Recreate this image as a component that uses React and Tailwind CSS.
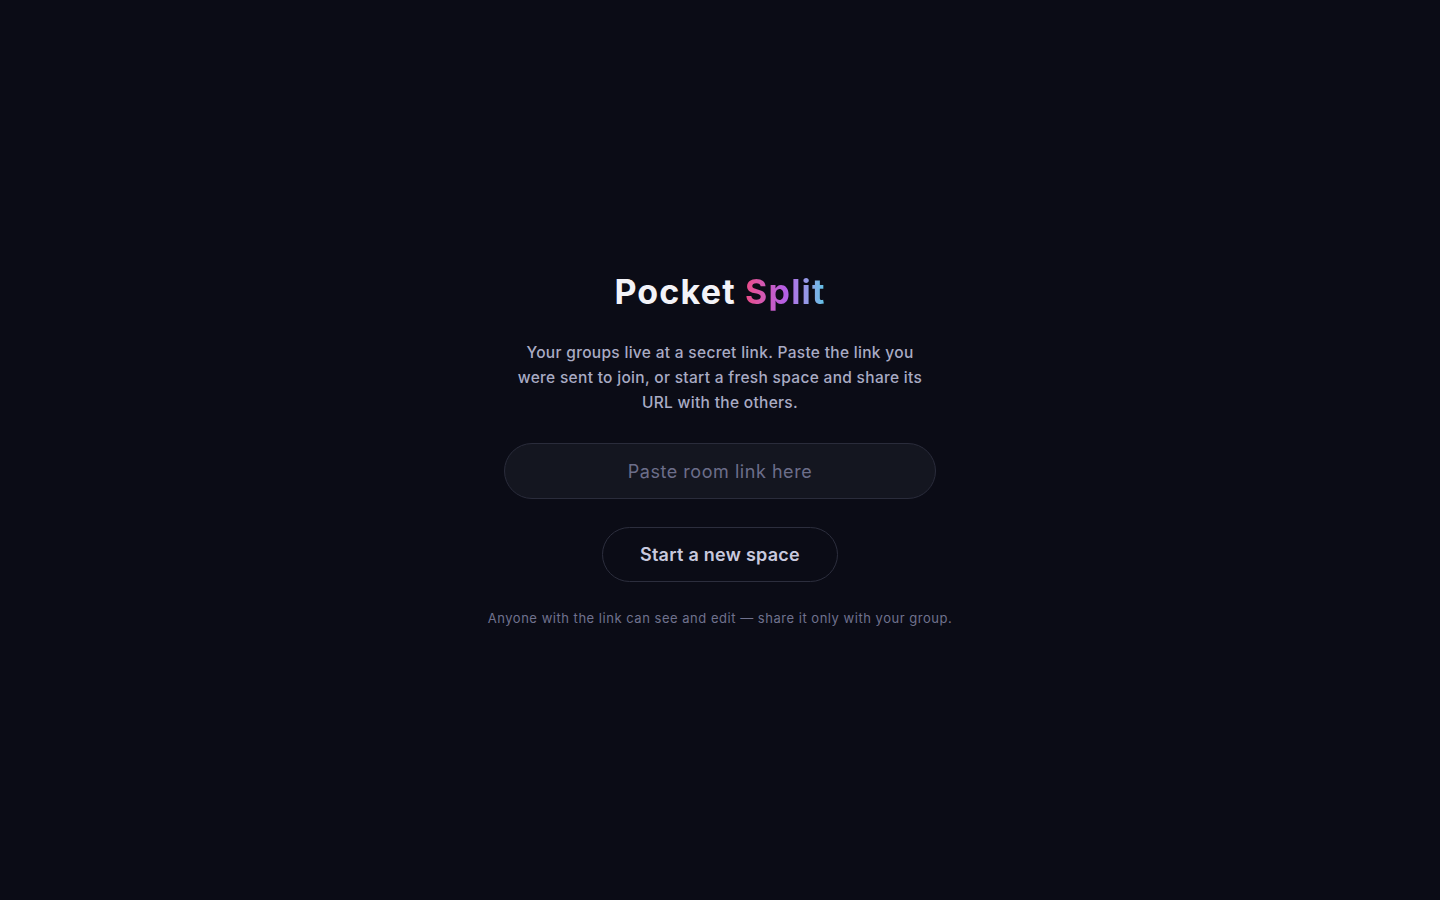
export default function App() {
  return (
    <div
      className="min-h-screen w-full bg-[#0b0c16] flex items-center justify-center"
      style={{ fontFamily: "Inter, 'Noto Sans', sans-serif" }}
    >
      <div className="flex flex-col items-center">
        <h1 className="text-[34px] leading-[40px] font-bold tracking-[0.035em] text-[#f3f3f8]">
          Pocket{" "}
          <span className="bg-gradient-to-r from-[#ec4a86] via-[#b45ee6] to-[#55c6e6] bg-clip-text text-transparent">
            Split
          </span>
        </h1>
        <p className="mt-[28px] w-[418px] text-center text-[15.5px] leading-[25px] font-medium tracking-[0.02em] text-[#a9abc4]">
          Your groups live at a secret link. Paste the link you were sent to join, or start a fresh space and share its URL with the others.
        </p>
        <input
          type="text"
          placeholder="Paste room link here"
          className="mt-[28px] w-[432px] h-[56px] rounded-full bg-[#141620] border border-[#2a2c3b] text-center text-[18px] tracking-[0.03em] text-[#d0d1e4] placeholder:text-[#6c6e8a] outline-none"
        />
        <button className="mt-[28px] w-[236px] h-[55px] rounded-full border border-[#2c2e3d] bg-transparent text-[18px] font-semibold tracking-[0.015em] text-[#c8c9de]">
          Start a new space
        </button>
        <p className="mt-[26px] text-[13px] leading-[20px] tracking-[0.04em] text-[#70728e]">
          Anyone with the link can see and edit — share it only with your group.
        </p>
      </div>
    </div>
  );
}
